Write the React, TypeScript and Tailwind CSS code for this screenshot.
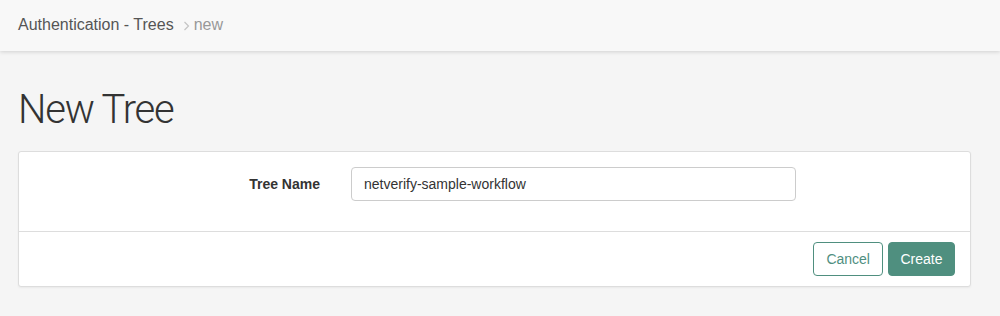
export default function App() {
  return (
    <div className="min-h-[316px] bg-[#f5f5f5] font-['Liberation_Sans',Arial,sans-serif] text-[#333]">
      <header className="flex h-[51px] items-center bg-[#f8f8f8] px-[18px] pb-[2px] shadow-[0_1px_4px_rgba(0,0,0,0.15)]">
        <span className="text-[16px] text-[#555]">Authentication - Trees</span>
        <svg width="7" height="10" viewBox="0 0 7 10" className="mr-[4px] ml-[9px] mt-[2px]">
          <path d="M1.5 1 L5.5 5 L1.5 9" fill="none" stroke="#c4c4c4" strokeWidth="1.2" />
        </svg>
        <span className="text-[16px] text-[#999]">new</span>
      </header>

      <main className="px-[18px]">
        <h1 className="pt-[37px] pb-[19px] font-['Roboto',sans-serif] text-[40px] font-light leading-[44px] tracking-[-1.2px] text-[#333]">
          New Tree
        </h1>

        <div className="mr-[11px] rounded-[3px] border border-[#ddd] bg-white shadow-[0_1px_2px_rgba(0,0,0,0.05)]">
          <div className="flex h-[80px] items-start border-b border-[#ddd] pt-[15px]">
            <label className="w-[332px] pr-[31px] text-right text-[14px] leading-[34px] font-bold text-[#333]">
              Tree Name
            </label>
            <input
              defaultValue="netverify-sample-workflow"
              className="h-[34px] w-[445px] rounded-[4px] border border-[#ccc] px-[12px] text-[14px] text-[#333] outline-none"
            />
          </div>
          <div className="flex h-[54px] items-center justify-end gap-[5px] px-[15px]">
            <button className="h-[34px] rounded-[4px] border border-[#4f8f7f] bg-white px-[12px] text-[14px] text-[#4f8f7f]">
              Cancel
            </button>
            <button className="h-[34px] rounded-[4px] border border-[#4f8f7f] bg-[#4f8f7f] px-[11.5px] text-[14px] text-white">
              Create
            </button>
          </div>
        </div>
      </main>
    </div>
  )
}
